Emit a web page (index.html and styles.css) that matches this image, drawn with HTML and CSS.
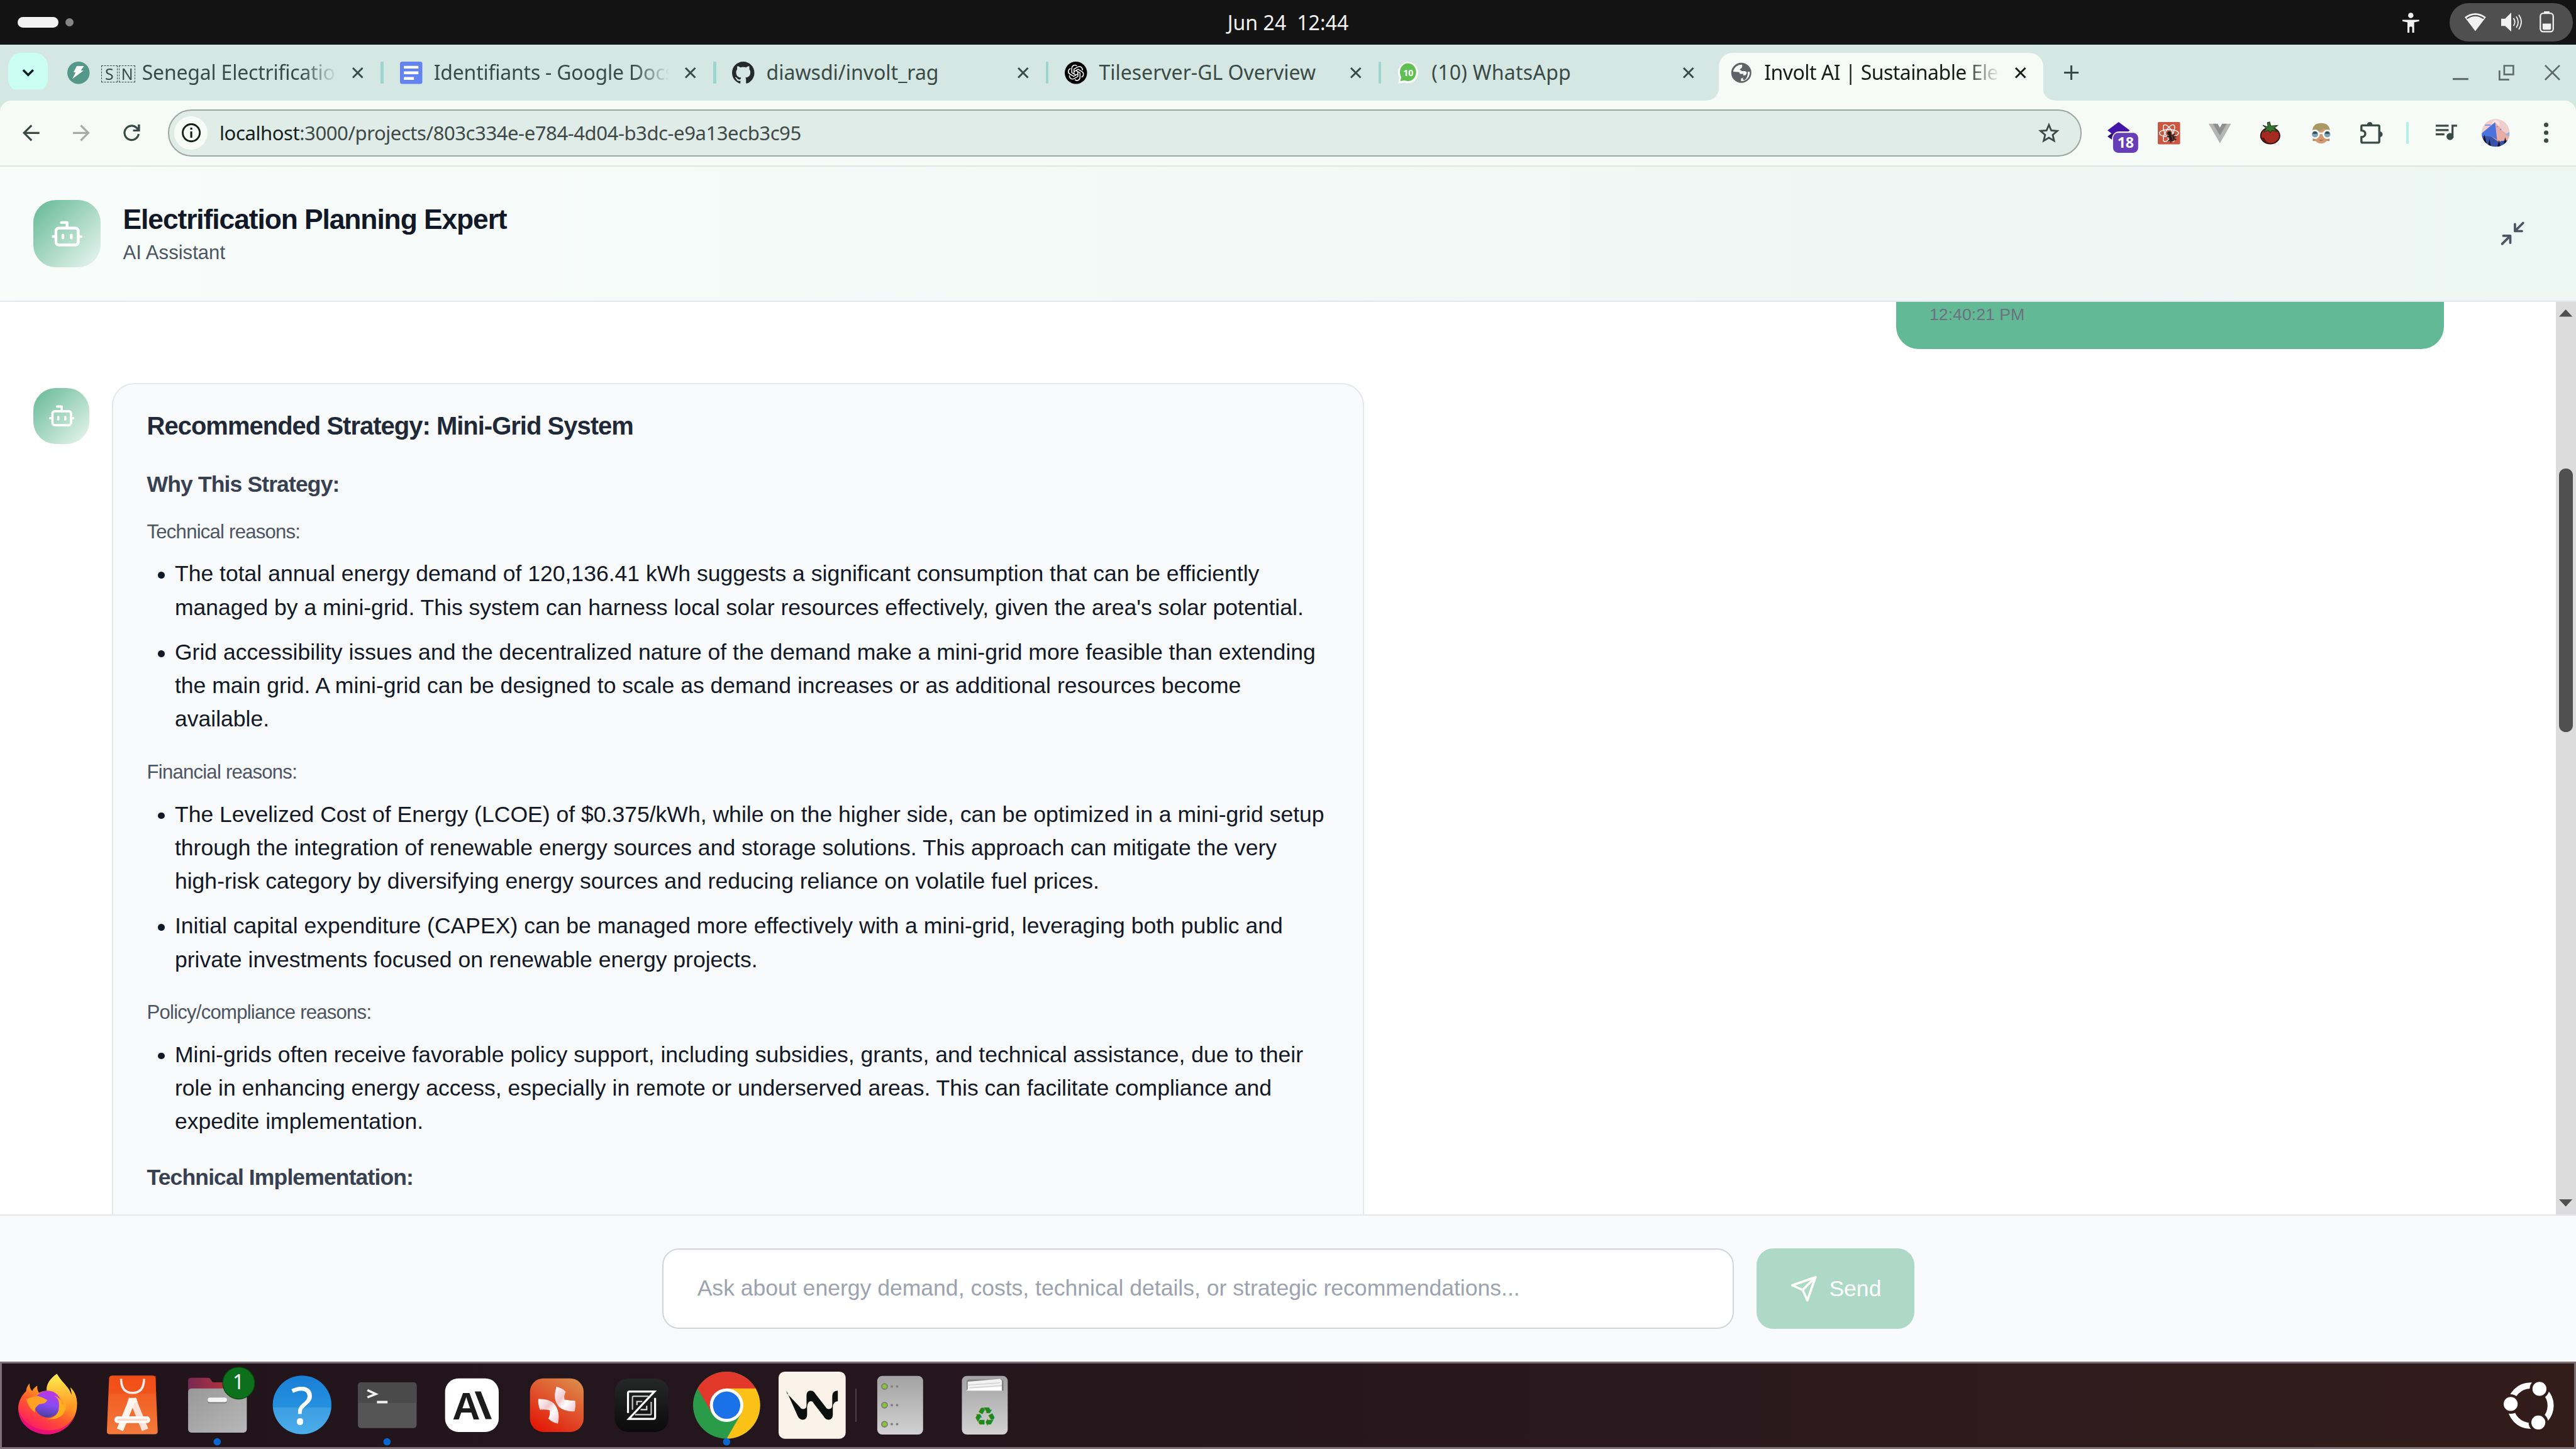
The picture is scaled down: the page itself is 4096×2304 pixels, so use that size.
FILE: index.html
```html
<!DOCTYPE html>
<html lang="en">
<head>
<meta charset="utf-8">
<title>Involt AI | Sustainable Electrification</title>
<link rel="stylesheet" href="styles.css">
</head>
<body>
<svg class="defs" width="0" height="0">
  <symbol id="close" viewBox="0 0 24 24"><path d="M2.5 2.5l19 19M21.500 2.500l-19 19" fill="none" stroke="currentColor" stroke-width="3.600"/></symbol>
  <symbol id="bot" viewBox="0 0 24 24"><g fill="none" stroke="currentColor" stroke-width="2" stroke-linecap="round" stroke-linejoin="round"><path d="M12 8V4H8M2 14h2M20 14h2M15 13v2M9 13v2"/><rect x="4" y="8" width="16" height="12" rx="2"/></g></symbol>
</svg>

<div class="desktop">
  <div class="topbar">
    <div class="workspaces"><i class="ws-on"></i><i class="ws-off"></i></div>
    <div class="clock">Jun 24 &nbsp;12:44</div>
    <div class="tray">
      <svg class="a11y" viewBox="0 0 30 36"><circle cx="15" cy="5" r="4.800" fill="#f2f2f2"/><path d="M0 13h30v2.500l-9 2V36h-3.500V26q-2.500-2-5 0v10H9V17.500L0 15.500z" fill="#f2f2f2"/></svg>
      <div class="sys">
        <svg class="wifi" viewBox="0 0 38 32"><path d="M0 7Q19-7 38 7L19 32z" fill="#f2f2f2"/><path d="M4 9.500Q19-1 34 9.500" fill="none" stroke="#4f4f4f" stroke-width="2.500"/></svg>
        <svg class="vol" viewBox="0 0 38 34"><path d="M0 11h7L18 0v34L7 24H0z" fill="#f2f2f2"/><path d="M22 10q5 7 0 14M27 7q7 10 0 20M31.500 4q9 13 0 26" fill="none" stroke="#f2f2f2" stroke-width="2"/></svg>
        <svg class="bat" viewBox="0 0 26 38"><rect x="8" y="0" width="10" height="4" fill="#f2f2f2"/><rect x="1.500" y="3.500" width="23" height="33" rx="5" fill="none" stroke="#f2f2f2" stroke-width="2.500"/><path d="M5.500 22h15v9q0 2-2 2h-11q-2 0-2-2z" fill="#f2f2f2"/></svg>
      </div>
    </div>
  </div>

  <div class="tabbar">
    <div class="chev"><svg viewBox="0 0 22 14"><path d="M2 2.500l9 9 9-9" fill="none" stroke="#0f1f1c" stroke-width="4"/></svg></div>
    <div class="tab">
      <svg class="fav" viewBox="0 0 40 40"><circle cx="20" cy="20" r="20" fill="#549889"/><path d="M17 8h13l-6 8h5L9 31l6-12h-4z" fill="#fff"/></svg>
      <div class="tt fade"><span class="flag">S</span><span class="flag">N</span> Senegal Electrification</div>
      <svg class="x"><use href="#close"/></svg><i class="sep"></i>
    </div>
    <div class="tab">
      <svg class="fav" viewBox="0 0 40 40"><rect width="40" height="40" rx="4" fill="#6384ee"/><path d="M7 10h26M7 20h26M7 30h18" stroke="#fff" stroke-width="5"/></svg>
      <div class="tt fade">Identifiants - Google Docs</div>
      <svg class="x"><use href="#close"/></svg><i class="sep"></i>
    </div>
    <div class="tab">
      <svg class="fav" viewBox="0 0 16 16"><path fill="#24292e" d="M8 0C3.580 0 0 3.580 0 8c0 3.540 2.290 6.530 5.470 7.590.4.070.55-.17.55-.38 0-.19-.01-.82-.01-1.490-2.010.37-2.530-.49-2.690-.94-.09-.23-.48-.94-.82-1.130-.28-.15-.68-.52-.01-.53.63-.01 1.080.58 1.230.82.72 1.210 1.870.87 2.330.66.070-.52.28-.87.51-1.070-1.780-.2-3.640-.89-3.640-3.950 0-.87.31-1.590.82-2.150-.08-.2-.36-1.020.08-2.120 0 0 .67-.21 2.200.82.64-.18 1.320-.27 2-.27s1.360.09 2 .27c1.530-1.040 2.200-.82 2.200-.82.44 1.100.16 1.920.08 2.120.51.56.82 1.270.82 2.150 0 3.070-1.870 3.750-3.650 3.950.29.25.54.73.54 1.480 0 1.070-.01 1.930-.01 2.200 0 .21.15.46.55.38A8.010 8.010 0 0 0 16 8c0-4.420-3.580-8-8-8z"/></svg>
      <div class="tt">diawsdi/involt_rag</div>
      <svg class="x"><use href="#close"/></svg><i class="sep"></i>
    </div>
    <div class="tab">
      <svg class="fav" viewBox="0 0 40 40"><circle cx="20" cy="20" r="20" fill="#000"/><g fill="none" stroke="#fff" stroke-width="1.700"><path d="M16.500 22v-8.500l7-4a5.500 5.500 0 0 1 8 6"/><path d="M16.500 22v-8.500l7-4a5.500 5.500 0 0 1 8 6" transform="rotate(60 20 20)"/><path d="M16.500 22v-8.500l7-4a5.500 5.500 0 0 1 8 6" transform="rotate(120 20 20)"/><path d="M16.500 22v-8.500l7-4a5.500 5.500 0 0 1 8 6" transform="rotate(180 20 20)"/><path d="M16.500 22v-8.500l7-4a5.500 5.500 0 0 1 8 6" transform="rotate(240 20 20)"/><path d="M16.500 22v-8.500l7-4a5.500 5.500 0 0 1 8 6" transform="rotate(300 20 20)"/></g></svg>
      <div class="tt">Tileserver-GL Overview</div>
      <svg class="x"><use href="#close"/></svg><i class="sep"></i>
    </div>
    <div class="tab">
      <svg class="fav" viewBox="0 0 40 40"><path d="M1.500 39l2-10A18 19 0 1 1 12 37z" fill="#fff"/><path d="M5 35l2-7a14.500 16 0 1 1 6 5.500z" fill="#5fbf50"/><text x="19.500" y="25.500" text-anchor="middle" class="wa">10</text></svg>
      <div class="tt wide">(10) WhatsApp</div>
      <svg class="x"><use href="#close"/></svg>
    </div>
    <div class="tab active">
      <svg class="foot left" viewBox="0 0 24 26"><path d="M24 0v26H0Q24 24 24 0z" fill="#f7fbf7"/></svg>
      <svg class="foot right" viewBox="0 0 24 26"><path d="M0 0v26h24Q0 24 0 0z" fill="#f7fbf7"/></svg>
      <svg class="fav" viewBox="0 0 40 40"><circle cx="20" cy="20" r="18" fill="#5f6368"/><path d="M21 5.500A15 15 0 0 0 5.500 18l9 .5q3 .5 3 3.500h6v5q0 3-4 3v5A15 15 0 0 0 35 18h-7q-1 0-1-3h-6v-4q3 0 3-3z" fill="#f7fbf7"/><path d="M5.500 19.500h8l5 4v11A15 15 0 0 1 5.500 19.500zM22 5l-1 6-4 3 4 3h7l2 3-2 4-5 1v7l3 1A17 17 0 0 0 22 5z" fill="#5f6368"/></svg>
      <div class="tt fade">Involt AI | Sustainable Electrification</div>
      <svg class="x"><use href="#close"/></svg>
    </div>
    <svg class="plus" viewBox="0 0 26 26"><path d="M13 0v26M0 13h26" stroke="#3a4a47" stroke-width="3.400"/></svg>
    <div class="winctl">
      <svg viewBox="0 0 28 28"><path d="M0 25.500h28" stroke="#5f6b6a" stroke-width="3.500"/></svg>
      <svg viewBox="0 0 28 28"><path d="M10 1.700h16.300v15.600H10zM1.500 10v16.500H19" fill="none" stroke="#5f6b6a" stroke-width="3"/></svg>
      <svg viewBox="0 0 28 28"><path d="M1 1l26 26M27 1L1 27" stroke="#5f6b6a" stroke-width="3"/></svg>
    </div>
  </div>

  <div class="toolbar">
    <svg class="nav back" viewBox="0 0 30 30"><path d="M30 15H3M16 1.500L2.500 15 16 28.500" fill="none" stroke="#3a4a47" stroke-width="3.600"/></svg>
    <svg class="nav fwd" viewBox="0 0 30 30"><path d="M0 15h27M14 1.500L27.500 15 14 28.500" fill="none" stroke="#a6aaa8" stroke-width="3.600"/></svg>
    <svg class="nav rel" viewBox="0 0 30 30"><path d="M27.500 17A12.700 12.700 0 1 1 24 6l3 4" fill="none" stroke="#3a4a47" stroke-width="3.600"/><path d="M30 0v12.500H17.500V9H26V0z" fill="#3a4a47"/></svg>
    <div class="url">
      <div class="info"><svg viewBox="0 0 34 34"><circle cx="17" cy="17" r="15.300" fill="none" stroke="#151d1b" stroke-width="3.200"/><path d="M17 8v3.500M17 14.500V26" stroke="#151d1b" stroke-width="3.500"/></svg></div>
      <div class="addr"><b>localhost</b>:3000/projects/803c334e-e784-4d04-b3dc-e9a13ecb3c95</div>
      <svg class="star" viewBox="0 0 38 36"><path d="M19 4l4.200 10 10.800.9-8.200 7.100 2.500 10.500L19 27l-9.300 5.500L12.200 22 4 14.900 14.800 14z" fill="none" stroke="#3a4a47" stroke-width="3.200"/></svg>
    </div>
    <div class="exts">
      <svg viewBox="0 0 56 56"><path d="M0 26l8-6 20 14-8 6z" fill="#2d1070"/><path d="M0 15L20 0l20 15-20 15z" fill="#4316a8"/><rect x="8" y="17" width="50" height="42" rx="13" fill="#f7fbf7"/><rect x="10" y="19.500" width="45" height="35.500" rx="9" fill="#673eb8"/><text x="32.500" y="46.500" text-anchor="middle" class="badge18">18</text></svg>
      <svg viewBox="0 0 40 40"><rect width="40" height="40" rx="2" fill="#cb5742"/><g fill="none" stroke="#fff" stroke-width="1.600"><ellipse cx="20" cy="20" rx="17" ry="6.500"/><ellipse cx="20" cy="20" rx="17" ry="6.500" transform="rotate(60 20 20)"/><ellipse cx="20" cy="20" rx="17" ry="6.500" transform="rotate(120 20 20)"/></g><path d="M17 26l11-5 6 10-10 6z" fill="#cb5742"/><circle cx="20.500" cy="20" r="3.500" fill="#1d1d1b"/><ellipse cx="25" cy="28" rx="4.500" ry="6.500" transform="rotate(-28 25 28)" fill="#1d1d1b"/><path d="M16 27l5-2M19 34l4-3M23 37l1-5M28 24l2-3M29 27l4-1M30 30l3 2" stroke="#1d1d1b" stroke-width="2"/><path d="M25 24l2.500 9" stroke="#cb5742" stroke-width="1"/></svg>
      <svg viewBox="0 0 40 40"><path d="M0 3h12l8 13 8-13h12L20 38z" fill="#b5b5b5"/><path d="M7.500 3H16l4 7 4-7h8.500L20 24z" fill="#8f8f8f"/></svg>
      <svg viewBox="0 0 40 40"><ellipse cx="20" cy="24.500" rx="17" ry="14.500" fill="#a52b22" stroke="#2a1010" stroke-width="2"/><path d="M5 28q4 9 12 9-6-3-8-9z" fill="#5c1212"/><path d="M7 6l9 3-1-8 4-1 2 7 12-1-6 5 5 6-9-2-3 4-3-4-8 3 4-7z" fill="#37742f" stroke="#1d3a18" stroke-width="1.200"/></svg>
      <svg viewBox="0 0 40 40"><path d="M5 14h30v20H5z" fill="#b58a5c"/><ellipse cx="20" cy="21" rx="14.500" ry="17.500" fill="#d39a72"/><path d="M4 19Q4 2 20 2t16 17q-5 0-11-8-9 8-21 8z" fill="#a89864"/><g stroke="#fff" stroke-width="2.800" fill="#7ba4b0"><circle cx="9" cy="22" r="7"/><circle cx="31" cy="22" r="7"/><path d="M15 21q5-2 10 0" fill="none"/></g><path d="M5 21a4 4 0 0 1 8 0zM27 21a4 4 0 0 1 8 0z" fill="#304a55"/><path d="M15.500 32h9q-4.500 3-9 0z" fill="#9c4f3c"/></svg>
      <svg viewBox="0 0 40 40"><path d="M4 6h28q2 0 2 2v27q0 2-2 2H4q-2 0-2-2v-8q7-1 7-6t-7-6V8q0-2 2-2z" fill="none" stroke="#3a4a47" stroke-width="3.800"/><path d="M12 5a5 5 0 0 1 10 0zM35 17a5 5 0 0 1 0 10z" fill="#3a4a47"/></svg>
    </div>
    <i class="tsep"></i>
    <svg class="music" viewBox="0 0 38 30"><path d="M0 2.200h23M0 10h23M0 17.500h15.500M30 24V2h8" fill="none" stroke="#3a4a47" stroke-width="3.600"/><circle cx="25.500" cy="21.500" r="6.300" fill="#3a4a47"/></svg>
    <svg class="avatar" viewBox="0 0 50 50"><clipPath id="av"><circle cx="25" cy="25" r="25"/></clipPath><g clip-path="url(#av)"><path d="M0 0h50v50H0z" fill="#efcfcd"/><circle cx="25" cy="9" r="7" fill="#f8e2dc"/><path d="M0 26L24 6l6 14 2 20-32 4z" fill="#4a72dc"/><path d="M24 6l8 9 5 6 14 10v9L28 42z" fill="#e8ada4"/><path d="M42 28l8-5v8z" fill="#8fb0ee"/><path d="M0 30l18 2 14 8 18-2v12H0z" fill="#3552a8"/><path d="M15 30l14 8 7 2-6 1z" fill="#e09a94"/><path d="M5 28l4 16H1zM14 36l3 14h-6zM31 38l3 12h-6zM42 33l4 14h-7z" fill="#15182c"/><path d="M6 11h10M27 15l1-2M33 20l2-2" stroke="#6d8fe6" stroke-width="2"/></g></svg>
    <svg class="dots" viewBox="0 0 8 36"><circle cx="4" cy="4" r="4" fill="#3a4a47"/><circle cx="4" cy="18" r="4" fill="#3a4a47"/><circle cx="4" cy="32" r="4" fill="#3a4a47"/></svg>
  </div>

  <header class="apphead">
    <div class="boticon big"><svg><use href="#bot"/></svg></div>
    <div class="titles">
      <h1>Electrification Planning Expert</h1>
      <p>AI Assistant</p>
    </div>
    <svg class="collapse" viewBox="0 0 24 24"><path d="M4 14h6v6M20 10h-6V4M14 10l7-7M3 21l7-7" fill="none" stroke="#4b5563" stroke-width="2" stroke-linecap="round" stroke-linejoin="round"/></svg>
  </header>

  <main class="chat">
    <div class="messages">
      <div class="usermsg">12:40:21 PM</div>
      <div class="reply">
        <div class="boticon"><svg><use href="#bot"/></svg></div>
        <article class="card">
          <h2>Recommended Strategy: Mini-Grid System</h2>
          <h3>Why This Strategy:</h3>
          <h4>Technical reasons:</h4>
          <ul>
            <li><p>The total annual energy demand of 120,136.41 kWh suggests a significant consumption that can be efficiently<br>managed by a mini-grid. This system can harness local solar resources effectively, given the area's solar potential.</p></li>
            <li><p>Grid accessibility issues and the decentralized nature of the demand make a mini-grid more feasible than extending<br>the main grid. A mini-grid can be designed to scale as demand increases or as additional resources become<br>available.</p></li>
          </ul>
          <h4>Financial reasons:</h4>
          <ul>
            <li><p>The Levelized Cost of Energy (LCOE) of $0.375/kWh, while on the higher side, can be optimized in a mini-grid setup<br>through the integration of renewable energy sources and storage solutions. This approach can mitigate the very<br>high-risk category by diversifying energy sources and reducing reliance on volatile fuel prices.</p></li>
            <li><p>Initial capital expenditure (CAPEX) can be managed more effectively with a mini-grid, leveraging both public and<br>private investments focused on renewable energy projects.</p></li>
          </ul>
          <h4>Policy/compliance reasons:</h4>
          <ul>
            <li><p>Mini-grids often receive favorable policy support, including subsidies, grants, and technical assistance, due to their<br>role in enhancing energy access, especially in remote or underserved areas. This can facilitate compliance and<br>expedite implementation.</p></li>
          </ul>
          <h3>Technical Implementation:</h3>
        </article>
      </div>
    </div>
    <div class="scroll">
      <svg viewBox="0 0 24 13"><path d="M12 0l12 13H0z" fill="#505050"/></svg>
      <i class="thumb"></i>
      <svg viewBox="0 0 24 13"><path d="M12 13L24 0H0z" fill="#505050"/></svg>
    </div>
  </main>

  <footer class="composer">
    <div class="field">Ask about energy demand, costs, technical details, or strategic recommendations...</div>
    <div class="send"><svg viewBox="0 0 24 24"><path d="M22 2L11 13M22 2l-7 20-4-9-9-4 20-7z" fill="none" stroke="#fff" stroke-width="2" stroke-linecap="round" stroke-linejoin="round"/></svg>Send</div>
  </footer>

  <div class="dock">
    <svg viewBox="0 0 120 120">
      <defs>
        <linearGradient id="ff" x1=".8" y1="0" x2=".25" y2="1"><stop offset="0" stop-color="#fff44f"/><stop offset=".3" stop-color="#ffb020"/><stop offset=".6" stop-color="#ff5a2c"/><stop offset=".85" stop-color="#ff2a55"/><stop offset="1" stop-color="#e0107c"/></linearGradient>
        <linearGradient id="fg" x1=".6" y1="0" x2=".4" y2="1"><stop offset="0" stop-color="#c233e0"/><stop offset=".5" stop-color="#8a4bf5"/><stop offset="1" stop-color="#4a3f9c"/></linearGradient>
        <linearGradient id="fy" x1="0" y1="0" x2="0" y2="1"><stop offset="0" stop-color="#fff04f"/><stop offset="1" stop-color="#ff8a1e"/></linearGradient>
      </defs>
      <path d="M28 21Q22 28 22 35C12 44 7 58 8 68 10 95 33 112 60 112s53-22 53-53c0-14-5-25-12-31q3 8 2 14C99 27 86 20 77 4 63 14 58 24 59 34q-9 1-14 4-4-6-3-13-7 4-9 10-5-5-5-14z" fill="url(#ff)"/>
      <path d="M8 68C10 95 33 112 60 112c26 0 44-17 51-38-9 20-26 32-49 31C34 104 16 90 8 68z" fill="#e5097f" opacity=".75"/>
      <path d="M77 4C63 14 58 24 59 34c22 2 33 18 32 37 14-4 22-12 22-14 0-13-5-23-12-29q3 8 2 14C99 27 86 20 77 4z" fill="url(#fy)"/>
      <circle cx="60.500" cy="58" r="24" fill="url(#fg)"/>
      <path d="M22 49Q36 44 44 44q8 2 16 7-3 7-14 7-10 6-8 15-12-8-16-24z" fill="#ffa125"/>
      <path d="M71 43q13 4 9 26-4 14-21 16 20 2 30-10 8-12 1-24 0 6-3 8-4-14-16-16z" fill="#ffae1f"/>
    </svg>
    <svg viewBox="0 0 120 120">
      <defs><linearGradient id="so" x1="0" y1="0" x2="0" y2="1"><stop offset="0" stop-color="#f3521a"/><stop offset="1" stop-color="#f27a3c"/></linearGradient></defs>
      <path d="M25 7h71q5 0 5.500 5l4 95q0 5-5 5H19.500q-5 0-5-5l4-95Q19 7 25 7z" fill="url(#so)"/>
      <path d="M18 39h85l-.5-5V8H20z" fill="#f04a12" opacity=".5"/>
      <path d="M40 13q0 25 20.500 25T81 13" fill="none" stroke="#f2eeec" stroke-width="4"/>
      <path d="M60.500 49L83 104" stroke="#fde4da" stroke-width="12"/><path d="M60.500 49L38 104" stroke="#fff6f0" stroke-width="12"/><path d="M54 47h13l3 8H51z" fill="#fff6f0"/>
      <rect x="28" y="80" width="64" height="12" rx="6" fill="#fff"/><rect x="33" y="84" width="54" height="4" rx="2" fill="#fadacb"/>
    </svg>
    <svg viewBox="0 0 120 120">
      <defs><linearGradient id="fo" x1="0" y1="0" x2="1" y2="0"><stop offset="0" stop-color="#772953"/><stop offset=".7" stop-color="#b8323c"/></linearGradient><linearGradient id="fn" x1="0" y1="0" x2="1" y2="1"><stop offset="0" stop-color="#989898"/><stop offset="1" stop-color="#b8b8b8"/></linearGradient></defs>
      <path d="M13 11h31q3 0 5 4t5 4h53q5 0 5 5v30H8V16q0-5 5-5z" fill="url(#fo)"/>
      <rect x="8" y="30" width="105" height="79" rx="6" fill="url(#fn)"/>
      <rect x="43" y="48" width="34.500" height="8.500" rx="4" fill="#7a7a7a"/><rect x="43" y="46.500" width="34.500" height="8" rx="4" fill="#f4f4f4"/>
      <circle cx="98.500" cy="20.500" r="28.500" fill="#0c701c" stroke="#08480f" stroke-width="1.500"/><text x="98" y="32" text-anchor="middle" class="num">1</text>
      <circle cx="60" cy="125.500" r="6.500" fill="#0a66d2"/>
    </svg>
    <svg viewBox="0 0 120 120">
      <defs><linearGradient id="he" x1="0" y1="0" x2="0" y2="1"><stop offset="0" stop-color="#1a7fd6"/><stop offset=".54" stop-color="#2491df"/><stop offset=".55" stop-color="#3d9fe2"/><stop offset="1" stop-color="#4bade9"/></linearGradient></defs>
      <circle cx="60" cy="59.500" r="52.500" fill="url(#he)"/><text x="60" y="95" text-anchor="middle" class="q">?</text>
    </svg>
    <svg viewBox="0 0 120 120"><rect x="8" y="19" width="105" height="82" rx="6" fill="#555"/><path d="M8 56V25q0-6 6-6h93q6 0 6 6v31z" fill="#4a4a4a"/><path d="M25 33l15 7-15 6" fill="none" stroke="#f2f2f2" stroke-width="4"/><path d="M42 54.500h19" stroke="#f2f2f2" stroke-width="4.500"/><circle cx="60" cy="125.500" r="6.500" fill="#0a66d2"/></svg>
    <svg viewBox="0 0 120 120"><rect x="12" y="12" width="96" height="96" rx="24" fill="#fff"/><text x="50" y="85" text-anchor="middle" class="mono">A</text><path d="M65 35.500h11L95.500 85h-11z" fill="#1c1c1c"/></svg>
    <svg viewBox="0 0 120 120">
      <defs><linearGradient id="rd" x1=".8" y1="0" x2=".2" y2="1"><stop offset="0" stop-color="#dd8848"/><stop offset=".5" stop-color="#e0502a"/><stop offset="1" stop-color="#e31705"/></linearGradient><linearGradient id="bl" x1="0" y1="0" x2="1" y2="1"><stop offset="0" stop-color="#fff"/><stop offset=".4" stop-color="#f0c8ce"/><stop offset=".6" stop-color="#fff"/><stop offset="1" stop-color="#ecc4cb"/></linearGradient></defs>
      <rect x="12" y="12" width="96" height="96" rx="24" fill="url(#rd)"/><path d="M59 27q11 2 17 9-4 8-2 14 8 2 19 2 1 10-1 19-18 1-28-8-12-14-5-34z" fill="url(#bl)"/><path d="M27 49q18-1 28 8 12 14 7 36-10-2-17-9 4-8 2-15-7-2-17-1-4-9-3-19z" fill="url(#bl)"/>
    </svg>
    <svg viewBox="0 0 120 120"><defs><linearGradient id="ze" x1="0" y1="0" x2="0" y2="1"><stop offset="0" stop-color="#262827"/><stop offset="1" stop-color="#0a0a0a"/></linearGradient></defs><rect x="12" y="12" width="96" height="96" rx="24" fill="url(#ze)"/><g fill="none" stroke="#fff"><path d="M35.500 74V38q0-2.500 3-2.500H83L37 84.500h44q3 0 3-3V47" stroke-width="3.600"/><path d="M43.500 68V46q0-2 2-2H72M77 54v21q0 2-2 2H48" stroke="#ccc" stroke-width="2.400"/><path d="M51.500 60V53.500H61M69 61v7H58" stroke="#ddd" stroke-width="2.400"/></g></svg>
    <svg viewBox="0 0 120 120"><circle cx="60" cy="60" r="60" fill="#2a9b48"/><path d="M8 30A60 60 0 0 1 112 30L60 60 34 75z" fill="#e2392c"/><path d="M60 30h52A60 60 0 0 1 60 120L86 75z" fill="#fbc116"/><circle cx="60" cy="60" r="30" fill="#fff"/><circle cx="60" cy="60" r="24.500" fill="#1b72e8"/><circle cx="60" cy="125.500" r="6.500" fill="#0a66d2"/></svg>
    <svg viewBox="0 0 120 120"><rect width="120" height="120" rx="11" fill="#fbf2e9"/><path d="M14 34L34 79Q37 86 43 86q8 0 8-9V63q1-10 7-10 3 0 5 4L80 79q4 7 9 7 8 0 8-9V62q1-8 9-9V34q-10 0-10 10v16q0 7-6 7-4 0-6-4L66 40q-3-6-9-6-7 0-7 9v17q0 7-6 7-4 0-6-4L15 39z" fill="#0b0f0d"/></svg>
    <i class="dsep"></i>
    <svg viewBox="0 0 120 120"><defs><linearGradient id="gr" x1="0" y1="0" x2="0" y2="1"><stop offset="0" stop-color="#a2a2a2"/><stop offset="1" stop-color="#d2d2d2"/></linearGradient></defs><rect x="19" y="7.500" width="82" height="105" rx="9" fill="url(#gr)"/><g fill="#86c72e" stroke="#7b7b7b" stroke-width="2"><circle cx="32" cy="26.500" r="5"/><circle cx="32" cy="60" r="5"/><circle cx="32" cy="94" r="5"/></g><path d="M43 26.500h4M52.500 26.500h4M43 60h4M52.500 60h4M43 94h4M52.500 94h4" stroke="#808080" stroke-width="4"/></svg>
    <svg viewBox="0 0 120 120"><rect x="18.500" y="7.500" width="82" height="105" rx="9" fill="url(#gr)"/><path d="M27 34V18q0-4 5-4h56q5 0 5 4v16z" fill="#808080"/><path d="M29 34V18l58-5 3 3v18z" fill="#f2f2f2"/><path d="M30 24l57-4M32 29l58-4" stroke="#cfcfcf" stroke-width="1.500"/><path d="M26 34l4-3 58-4 2 7z" fill="#fff"/><text x="60" y="97" text-anchor="middle" class="rec">♻</text></svg>
    <svg class="ubuntu" viewBox="0 0 88 88"><circle cx="48" cy="44" r="36" fill="none" stroke="#fff" stroke-width="11"/><g fill="#fff" stroke="#331d1b" stroke-width="5"><circle cx="64" cy="14" r="15"/><circle cx="12.500" cy="41" r="15"/><circle cx="62" cy="74" r="15"/></g></svg>
  </div>
</div>
</body>
</html>
```
FILE: styles.css
```css
/* 1rem is 100 design pixels on a 4608px wide canvas */
html { font-size: calc(100vw / 46.08); }
body { margin: 0; background: #fff; font-family: "Liberation Sans", Arial, sans-serif; overflow: hidden; }
* { box-sizing: border-box; }
svg { display: block; flex: none; overflow: visible; }
.defs { position: absolute; }
h1, h2, h3, h4, p, ul { margin: 0; padding: 0; }

.desktop { width: 46.08rem; height: 25.92rem; display: flex; flex-direction: column; overflow: hidden; font-size: .4rem; }

/* system bar */
.topbar { height: .8rem; flex: none; background: #131313; display: grid; grid-template-columns: 1fr auto 1fr; align-items: center; font-family: "Noto Sans", sans-serif; }
.workspaces { display: flex; align-items: center; padding-left: .32rem; }
.ws-on { width: .73rem; height: .2rem; border-radius: .1rem; background: #f2f2f2; }
.ws-off { width: .15rem; height: .15rem; border-radius: 50%; background: #868686; margin-left: .12rem; }
.clock { color: #f2f2f2; font-size: .36rem; letter-spacing: .001rem; white-space: pre; line-height: .78rem; }
.tray { display: flex; justify-content: flex-end; align-items: center; padding-right: .06rem; }
.a11y { width: .3rem; height: .36rem; margin-right: .55rem; }
.sys { width: 2.2rem; height: .68rem; border-radius: .34rem; background: #4f4f4f; display: flex; align-items: center; padding-left: .27rem; }
.wifi { width: .38rem; height: .32rem; }
.vol { width: .38rem; height: .34rem; margin-left: .27rem; }
.bat { width: .26rem; height: .38rem; margin-left: .31rem; margin-top: -.02rem; }

/* tab strip */
.tabbar { height: 1rem; flex: none; background: #d5e7e2; display: flex; align-items: center; font-family: "Noto Sans", sans-serif; }
.chev { width: .7rem; height: .7rem; margin: 0 .075rem 0 .15rem; border-radius: .24rem; background: #cafef3; display: flex; align-items: center; justify-content: center; }
.chev svg { width: .22rem; height: .14rem; }
.tab { width: 5.95rem; height: 1rem; flex: none; display: flex; align-items: center; padding-left: .275rem; color: #3a4a47; position: relative; }
.fav { width: .4rem; height: .4rem; }
.tt { width: 4.26rem; margin: 0 .22rem 0 .21rem; font-size: .36rem; line-height: 1rem; white-space: nowrap; overflow: hidden; }
.tt.fade { letter-spacing: -.0025rem; -webkit-mask-image: linear-gradient(90deg, #000 84%, transparent 99%); mask-image: linear-gradient(90deg, #000 84%, transparent 99%); }
.tt.wide { letter-spacing: .003rem; }
.tab.active .tt { letter-spacing: -.006rem; }
.flag { display: inline-block; width: .29rem; height: .3rem; line-height: .28rem; border: .02rem dashed #3a4a47; text-align: center; font-size: .28rem; margin-right: .03rem; }
.x { width: .22rem; height: .22rem; }
.sep { width: .05rem; height: .4rem; border-radius: .02rem; background: #9bd6cd; margin-left: .3rem; flex: none; }
.active { color: #151d1b; }
.active::before { content: ""; position: absolute; left: .075rem; right: .075rem; top: .15rem; bottom: 0; background: #f7fbf7; border-radius: .25rem .25rem 0 0; }
.active > * { position: relative; }
.active > .foot { position: absolute; bottom: 0; width: .24rem; height: .26rem; }
.foot.left { left: -.16rem; }
.foot.right { right: -.16rem; }
.wa { font: bold 16px "Noto Sans", sans-serif; fill: #fff; }
.plus { width: .26rem; height: .26rem; margin-left: .3rem; }
.winctl { margin-left: auto; margin-right: .28rem; display: flex; gap: .54rem; }
.winctl svg { width: .28rem; height: .28rem; }

/* toolbar */
.toolbar { height: 1.18rem; flex: none; background: #f7fbf7; border-bottom: .03rem solid #dce6e3; border-radius: .2rem .2rem 0 0; box-shadow: 0 -.2rem 0 0 #d5e7e2; display: flex; align-items: center; padding-left: .4rem; }
.nav { width: .3rem; height: .3rem; }
.fwd, .rel { margin-left: .6rem; }
.url { width: 34.24rem; height: .85rem; margin-left: .5rem; border: .03rem solid #9aa6a3; border-radius: .43rem; background: #dfece8; display: flex; align-items: center; padding: 0 .38rem 0 .1rem; }
.info { width: .59rem; height: .59rem; border-radius: 50%; background: #f7fbf7; display: flex; align-items: center; justify-content: center; }
.info svg { width: .34rem; height: .34rem; }
.addr { flex: 1; margin-left: .215rem; font: .35rem/.8rem "Noto Sans", sans-serif; letter-spacing: -.0053rem; color: #404947; white-space: nowrap; }
.addr b { font-weight: 400; color: #151d1b; }
.star { width: .38rem; height: .36rem; }
.exts { display: flex; gap: .505rem; margin-left: .46rem; }
.exts svg { width: .4rem; height: .4rem; }
.exts svg:first-child { width: .56rem; height: .56rem; margin-right: -.16rem; margin-bottom: -.16rem; }
.badge18 { font: bold 26px "Noto Sans", sans-serif; fill: #fff; }
.tsep { width: .05rem; height: .4rem; border-radius: .02rem; background: #b3f1e8; margin-left: .42rem; }
.music { width: .38rem; height: .3rem; margin-left: .475rem; }
.avatar { width: .5rem; height: .5rem; margin-left: .45rem; }
.dots { width: .08rem; height: .36rem; margin-left: .61rem; }

/* assistant header */
.apphead { height: 2.42rem; flex: none; display: flex; align-items: center; padding: 0 .88rem 0 .6rem; border-bottom: .025rem solid #e2e7eb; background: linear-gradient(90deg, #f8fcfb, #ecf6f3); }
.boticon { width: 1rem; height: 1rem; flex: none; border-radius: .4rem; background: linear-gradient(135deg, #63b995, #ecf6f3); color: #fff; display: flex; align-items: center; justify-content: center; }
.boticon svg { width: .5rem; height: .5rem; }
.boticon.big { width: 1.2rem; height: 1.2rem; }
.boticon.big svg { width: .6rem; height: .6rem; }
.titles { flex: 1; margin-left: .4rem; }
h1 { font-size: .5rem; line-height: .7rem; letter-spacing: -.0125rem; color: #111827; }
.titles p { font-size: .35rem; line-height: .5rem; color: #4b5563; }
.collapse { width: .5rem; height: .5rem; }

/* conversation */
.chat { flex: 1; min-height: 0; display: flex; background: #fff; }
.messages { flex: 1; overflow: hidden; padding: 0 2rem 0 .6rem; }
.usermsg { width: 9.805rem; height: .84rem; margin-left: auto; background: #63b995; border-radius: 0 0 .4rem .4rem; padding: 0 .6rem; font-size: .3rem; line-height: .45rem; color: #6b7280; }
.reply { display: flex; margin-top: .61rem; }
.reply .boticon { margin-top: .09rem; }
.card { width: 22.4rem; height: 20rem; margin-left: .405rem; border: .025rem solid #e5e7eb; border-radius: .4rem; background: #f9fafc; padding: .4rem .6rem; white-space: nowrap; }
h2 { font-size: .45rem; line-height: .7rem; letter-spacing: -.01125rem; color: #1f2937; }
h3 { font-size: .4rem; line-height: .6rem; letter-spacing: -.01rem; color: #374151; margin-top: .4rem; }
h4 { font-size: .35rem; line-height: .5rem; letter-spacing: -.00875rem; font-weight: 400; color: #4b5563; margin: .4rem 0 .2rem; }
h3 + h4 { margin-top: .3rem; }
ul { list-style: none; display: grid; gap: .2rem; color: #111827; line-height: .6rem; }
li { display: flex; }
li::before { content: ""; width: .12rem; height: .12rem; flex: none; border-radius: 50%; background: #111827; margin: .26rem .18rem 0 .2rem; }
.scroll { width: .36rem; background: #dcdcdc; display: flex; flex-direction: column; align-items: center; padding: .14rem 0; }
.scroll svg { width: .24rem; height: .13rem; }
.thumb { width: .24rem; height: 4.72rem; margin: 2.71rem 0 auto; border-radius: .12rem; background: #505050; }

/* message box */
.composer { height: 2.64rem; flex: none; background: #f9fafc; border-top: .025rem solid #e5e7eb; display: flex; justify-content: center; align-items: center; gap: .4rem; padding: .01rem 0 0 .02rem; }
.field { width: 19.17rem; height: 1.44rem; border: .025rem solid #d1d5db; border-radius: .3rem; background: #fff; padding: 0 .6rem; line-height: 1.39rem; color: #9ca3af; white-space: nowrap; }
.send { width: 2.83rem; height: 1.44rem; border-radius: .3rem; background: #aed9c9; color: #fff; display: flex; align-items: center; padding-left: .6rem; gap: .2rem; }
.send svg { width: .5rem; height: .5rem; }

/* dock */
.dock { height: 1.56rem; flex: none; border: .04rem solid #7c7074; background: linear-gradient(90deg, #20141a, #24161c 35%, #2a191e 67%, #331d1b); display: flex; align-items: center; gap: .32rem; padding: 0 .38rem 0 .21rem; }
.dock > svg { width: 1.2rem; height: 1.2rem; }
.dsep { width: .02rem; height: .6rem; background: #4a4146; margin: 0 -.14rem; }
.dock > .ubuntu { width: .88rem; height: .88rem; margin-left: auto; }
.num { font: 36px "Noto Sans", sans-serif; fill: #fff; }
.q { font: 92px "Noto Sans", sans-serif; fill: #fff; }
.mono { font: bold 69px "Liberation Sans", sans-serif; fill: #1c1c1c; }
.rec { font: 46px "DejaVu Sans", sans-serif; fill: #21881c; }
```
